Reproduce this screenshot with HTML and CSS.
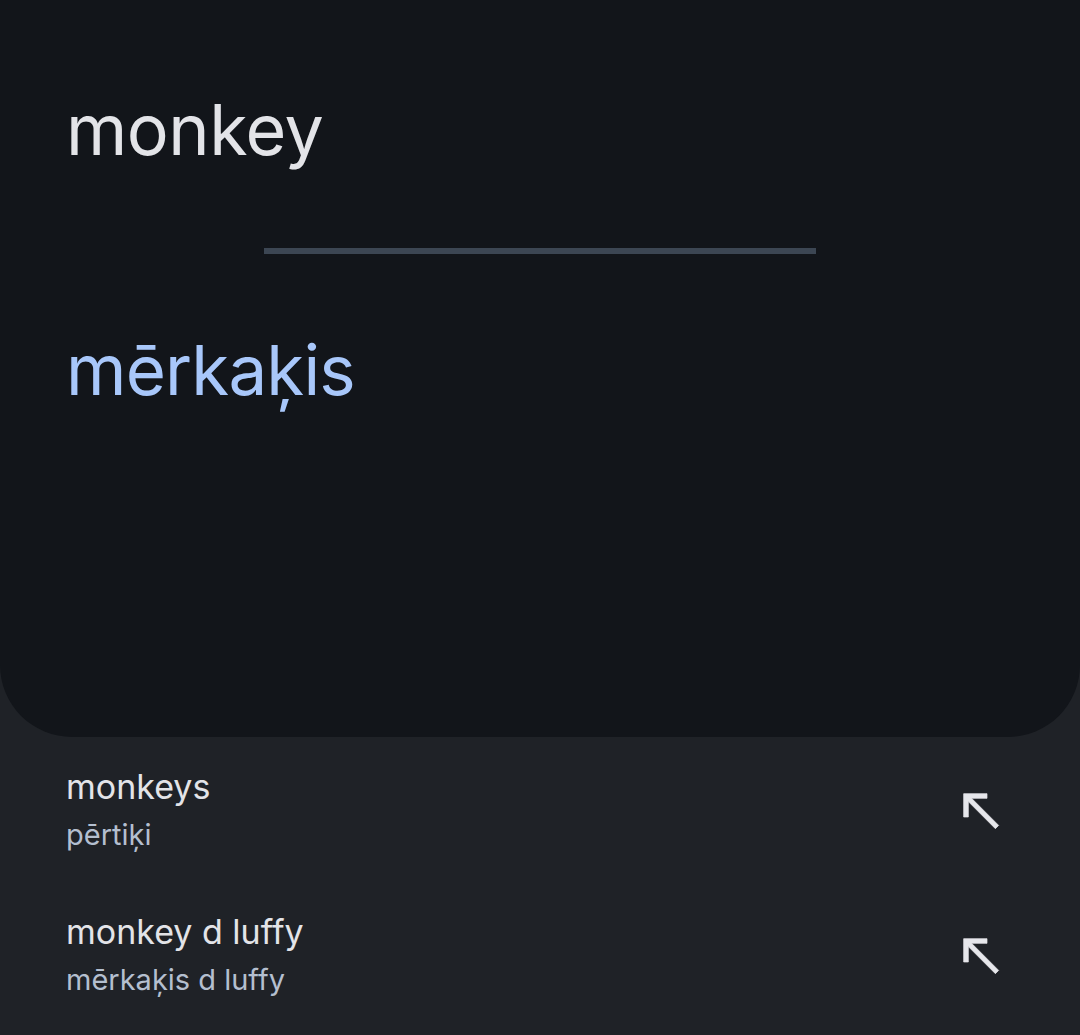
FILE: index.html
```html
<!DOCTYPE html>
<html lang="lv">
<head>
    <meta charset="UTF-8">
    <meta name="viewport" content="width=device-width, initial-scale=1.0">
    <title>Translate</title>
    <link rel="stylesheet" href="styles.css">
</head>
<body>

    <div class="card">
        <div class="source">monkey</div>
        <div class="divider"></div>
        <div class="result">mērkaķis</div>
    </div>

    <div class="suggestions">
        <div class="suggestion">
            <div class="texts">
                <div class="title">monkeys</div>
                <div class="sub">pērtiķi</div>
            </div>
            <svg class="arrow" viewBox="0 0 24 24"><path d="M5 15h2V8.41L18.59 20 20 18.59 8.41 7H15V5H5v10z"/></svg>
        </div>
        <div class="suggestion">
            <div class="texts">
                <div class="title">monkey d luffy</div>
                <div class="sub">mērkaķis d luffy</div>
            </div>
            <svg class="arrow" viewBox="0 0 24 24"><path d="M5 15h2V8.41L18.59 20 20 18.59 8.41 7H15V5H5v10z"/></svg>
        </div>
    </div>

</body>
</html>
```

FILE: styles.css
```css
/* Global styles */
html, body {
    margin: 0;
    padding: 0;
    height: 100%;
    overflow: hidden;
}

body {
    background-color: #1f2227;
    font-family: 'Inter', 'Noto Sans', sans-serif;
    color: #e3e4e8;
}

/* Translation card */
.card {
    background-color: #12151a;
    height: 737px;
    box-sizing: border-box;
    border-radius: 0 0 72px 72px;
    padding: 88px 66px 0;
}

.source {
    font-size: 70px;
    line-height: 84px;
    color: #e3e4e8;
    letter-spacing: -0.5px;
}

.divider {
    width: 552px;
    height: 6px;
    background-color: #3c4653;
    margin: 76px auto 0 198px;
}

.result {
    font-size: 69px;
    line-height: 84px;
    color: #a8c7fa;
    margin-top: 74px;
    letter-spacing: -0.8px;
}

/* Suggestions */
.suggestions {
    padding: 28px 66px 0;
    display: flex;
    flex-direction: column;
    gap: 55px;
}

.suggestion {
    display: flex;
    align-items: center;
    justify-content: space-between;
    height: 90px;
}

.title {
    font-size: 34px;
    line-height: 46px;
    color: #e3e4e8;
}

.sub {
    font-size: 29px;
    line-height: 44px;
    margin-top: 3px;
    color: #b4bfcf;
}

.arrow {
    width: 56px;
    height: 56px;
    fill: #e6e7eb;
    stroke: #e6e7eb;
    stroke-width: 0.3;
    margin-right: 6px;
}
```
